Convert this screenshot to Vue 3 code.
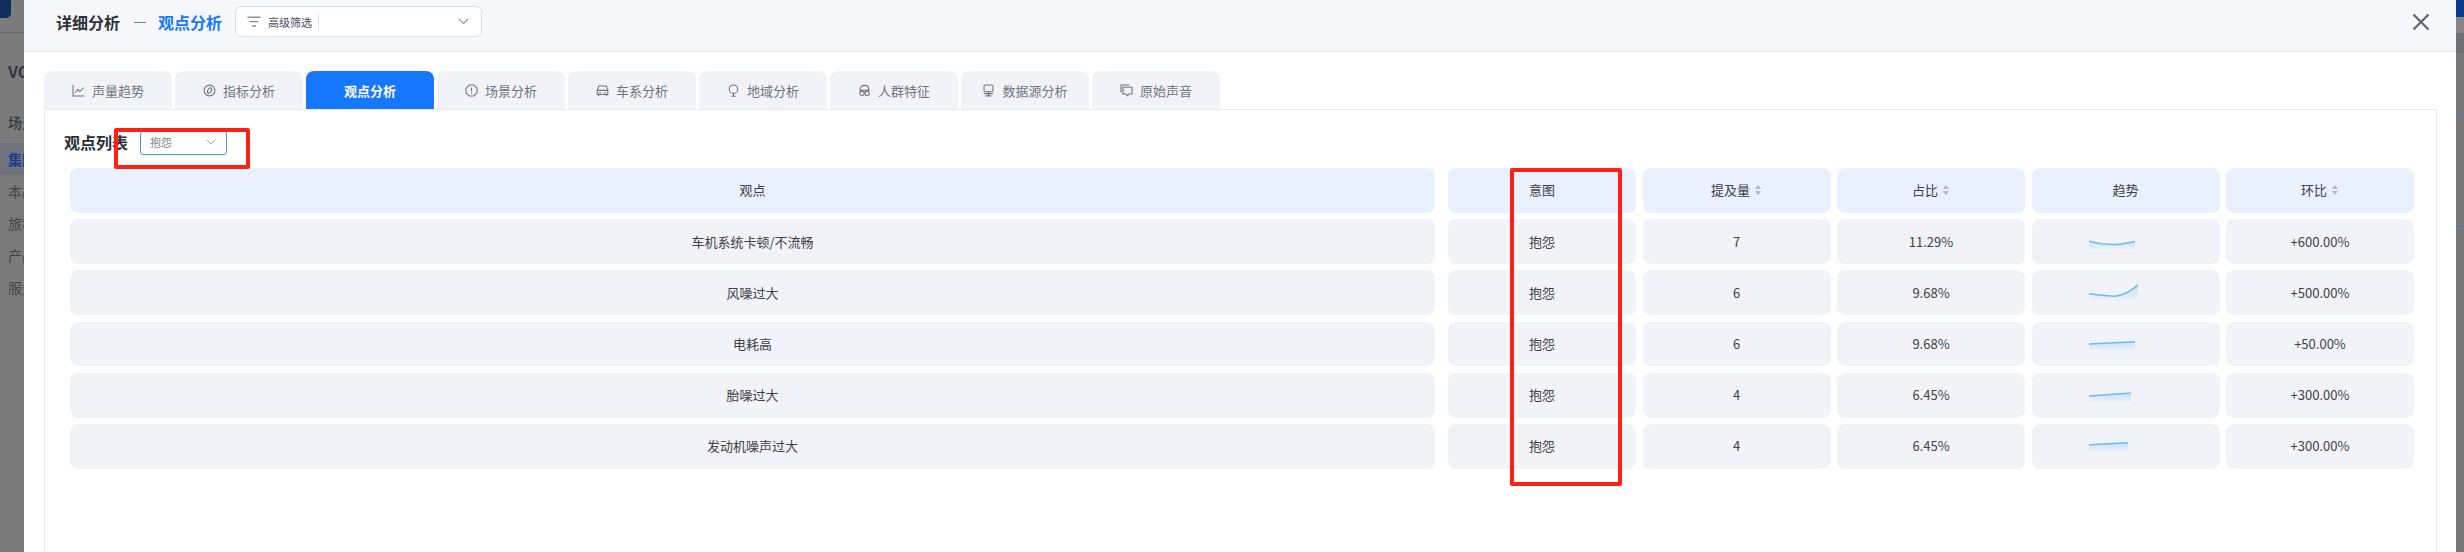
<script setup>
const sideItems = ['本品分析', '旅程分析', '产品分析', '服务分析']
const tabs = [
  { label: '声量趋势', icon: 'chart' },
  { label: '指标分析', icon: 'target' },
  { label: '观点分析', active: true },
  { label: '场景分析', icon: 'alert' },
  { label: '车系分析', icon: 'car' },
  { label: '地域分析', icon: 'pin' },
  { label: '人群特征', icon: 'people' },
  { label: '数据源分析', icon: 'screen' },
  { label: '原始声音', icon: 'comment' }
]
const rows = [
  { name: '车机系统卡顿/不流畅', count: 7, share: '11.29%', mom: '+600.00%', line: 'M13 20.2C22 22.8 30 23.5 36 23.5C44 23.5 52 22 59 20.4', area: 'L59 29L13 29Z' },
  { name: '风噪过大', count: 6, share: '9.68%', mom: '+500.00%', line: 'M13 21.8C22 23 31 24.2 39 24.2C47 23.6 55 19 62 13.2', area: 'L62 29L13 29Z' },
  { name: '电耗高', count: 6, share: '9.68%', mom: '+50.00%', line: 'M13 20L59 17.7', area: 'L59 27L13 27Z' },
  { name: '胎噪过大', count: 4, share: '6.45%', mom: '+300.00%', line: 'M13 21L55 18', area: 'L55 28L13 28Z' },
  { name: '发动机噪声过大', count: 4, share: '6.45%', mom: '+300.00%', line: 'M13 18.8L52 16.8', area: 'L52 27L13 27Z' }
]
</script>

<template>
  <div class="page">
    <aside class="side">
      <div class="side-top"><div class="logo"></div></div>
      <div class="side-brand">VOC</div>
      <div class="side-group">场景分析</div>
      <div class="side-item current">集团分析</div>
      <div v-for="item in sideItems" :key="item" class="side-item">{{ item }}</div>
    </aside>

    <main class="drawer">
      <header class="head">
        <span class="head-title">详细分析</span>
        <span class="head-dash"></span>
        <span class="head-sub">观点分析</span>
        <div class="filter">
          <svg class="filter-icon" width="14" height="12" viewBox="0 0 14 12">
            <path d="M0.5 1.2H13.5M2.8 5.6H11.2M5 10H9" stroke="#8a8d94" stroke-width="1.4" fill="none" />
          </svg>
          <span class="filter-text">高级筛选</span>
          <span class="filter-sep"></span>
          <svg class="filter-chev" width="11" height="7" viewBox="0 0 11 7">
            <path d="M1 1L5.5 5.5L10 1" stroke="#8f929a" stroke-width="1.1" fill="none" />
          </svg>
        </div>
        <svg class="close" width="18" height="18" viewBox="0 0 18 18">
          <path d="M1.5 1.5L16.5 16.5M16.5 1.5L1.5 16.5" stroke="#5f6673" stroke-width="2.3" fill="none" />
        </svg>
      </header>

      <div class="body">
        <nav class="tabs">
          <div v-for="tab in tabs" :key="tab.label" class="tab" :class="{ active: tab.active }">
            <svg v-if="tab.icon" class="tab-icon" width="13" height="13" viewBox="0 0 13 13" fill="none" stroke="#6f7580" stroke-width="1.1">
              <template v-if="tab.icon === 'chart'">
                <path d="M1 1V12H12.5" />
                <path d="M3 9L5.8 5.5L7.8 7.5L11.5 3.5" />
              </template>
              <template v-else-if="tab.icon === 'target'">
                <circle cx="6.5" cy="6.5" r="5.4" />
                <ellipse cx="6.5" cy="6.5" rx="1.7" ry="2.9" transform="rotate(30 6.5 6.5)" />
              </template>
              <template v-else-if="tab.icon === 'alert'">
                <path d="M4.2 1H8.8L12 4.2V8.8L8.8 12H4.2L1 8.8V4.2Z" />
                <path d="M6.5 3.4V7.4M6.5 8.6V9.8" />
              </template>
              <template v-else-if="tab.icon === 'car'">
                <path d="M1.2 6.4L2.6 2H10.4L11.8 6.4V10.4H1.2Z" />
                <path d="M1.2 6.4H11.8M2.6 10.4V12M10.4 10.4V12" />
                <path d="M3.4 8.4H4.6M8.4 8.4H9.6" />
              </template>
              <template v-else-if="tab.icon === 'pin'">
                <circle cx="6.5" cy="5.2" r="4.2" />
                <path d="M6.5 9.4V12M4.4 12.2H8.6" />
              </template>
              <template v-else-if="tab.icon === 'people'">
                <path d="M2.4 6V4.4C2.4 2.6 4 1.4 6.5 1.4C9 1.4 10.6 2.6 10.6 4.4V6" />
                <path d="M1.2 6.2H11.8" />
                <circle cx="4" cy="9.3" r="2.2" />
                <circle cx="9" cy="9.3" r="2.2" />
              </template>
              <template v-else-if="tab.icon === 'screen'">
                <rect x="2" y="1" width="9" height="6.8" rx="1.6" />
                <path d="M6.5 7.8V11.6M1.8 9.6H11.2M3.6 11.9H9.4" />
              </template>
              <template v-else>
                <path d="M1 8.5V1H9.5" />
                <path d="M3 3.2H12V10H8.8L7.5 11.8L6.2 10H3Z" />
              </template>
            </svg>
            <span>{{ tab.label }}</span>
          </div>
        </nav>

        <section class="panel">
          <div class="list-head">
            <h2 class="list-title">观点列表</h2>
            <div class="intent-select">
              <span>抱怨</span>
              <svg width="10" height="6" viewBox="0 0 10 6">
                <path d="M0.6 0.6L5 5L9.4 0.6" stroke="#a3a6ad" stroke-width="1" fill="none" />
              </svg>
            </div>
          </div>

          <div class="table">
            <div class="cell th first">观点</div>
            <div class="cell th">意图</div>
            <div class="cell th">提及量<i class="sort"></i></div>
            <div class="cell th">占比<i class="sort"></i></div>
            <div class="cell th">趋势</div>
            <div class="cell th">环比<i class="sort"></i></div>

            <template v-for="(row, i) in rows" :key="row.name">
              <div class="cell first">{{ row.name }}</div>
              <div class="cell">抱怨</div>
              <div class="cell">{{ row.count }}</div>
              <div class="cell">{{ row.share }}</div>
              <div class="cell">
                <svg width="100" height="40" viewBox="0 0 100 40" fill="none">
                  <defs>
                    <linearGradient :id="'fade' + i" x1="0" y1="0" x2="0" y2="1">
                      <stop offset="0" stop-color="#6cbcf0" stop-opacity="0.32" />
                      <stop offset="1" stop-color="#6cbcf0" stop-opacity="0" />
                    </linearGradient>
                  </defs>
                  <path :d="row.line + row.area" :fill="'url(#fade' + i + ')'" />
                  <path :d="row.line" stroke="#6cbcf0" stroke-width="1.5" />
                </svg>
              </div>
              <div class="cell">{{ row.mom }}</div>
            </template>
          </div>
        </section>
      </div>
    </main>

    <aside class="rail">
      <div class="rail-top"></div>
      <div class="rail-soft"></div>
      <div class="rail-dark"></div>
      <div class="rail-line first"></div>
      <div class="rail-line"></div>
    </aside>

    <div class="mark mark-select"></div>
    <div class="mark mark-column"></div>
  </div>
</template>

<style>
html, body { margin: 0; padding: 0; background: #777; }
</style>

<style scoped>
.page {
  position: relative;
  display: flex;
  width: 2464px;
  height: 552px;
  overflow: hidden;
  font-family: "Noto Sans CJK SC", "Noto Sans", sans-serif;
  font-size: 13px;
  color: #3d4048;
}
.side {
  width: 24px;
  flex: none;
  overflow: hidden;
  background: #7b7b7b;
  white-space: nowrap;
  color: #383a3f;
  font-size: 14px;
}
.side-top {
  height: 33px;
  box-sizing: border-box;
  border-bottom: 1px solid #696969;
}
.logo {
  width: 11px;
  height: 18px;
  background: #0e2d5c;
  border-radius: 0 0 5px 0;
}
.side-brand {
  margin: 26px 0 0 8px;
  height: 24px;
  line-height: 24px;
  font-size: 16px;
  font-weight: 700;
  color: #33353b;
}
.side-group {
  margin: 25px 0 7px 8px;
  height: 28px;
  line-height: 28px;
  font-weight: 500;
}
.side-item {
  height: 32px;
  line-height: 32px;
  padding-left: 8px;
  color: #444;
}
.side-item.current {
  background: #6f7380;
  color: #153b86;
  font-weight: 700;
}
.drawer {
  width: 2432px;
  flex: none;
  background: #fff;
  display: flex;
  flex-direction: column;
}
.head {
  height: 52px;
  box-sizing: border-box;
  padding: 0 26px 8px 32px;
  display: flex;
  align-items: center;
  background: #f5f7fb;
  border-bottom: 1px solid #e2e4ea;
}
.head-title, .head-sub {
  font-size: 16px;
  font-weight: 700;
  color: #2e3139;
}
.head-sub { color: #1677ff; }
.head-dash {
  width: 12px;
  height: 1px;
  margin: 1px 12px 0 14px;
  background: #7a7f8a;
}
.filter {
  width: 247px;
  height: 31px;
  box-sizing: border-box;
  margin-left: 13px;
  padding: 0 12px 0 11px;
  display: flex;
  align-items: center;
  background: #fff;
  border: 1px solid #dcdee4;
  border-radius: 6px;
}
.filter-text {
  margin-left: 7px;
  font-size: 11px;
  color: #4a4d55;
}
.filter-sep {
  width: 1px;
  height: 18px;
  margin-left: 6px;
  background: #e4e5ea;
}
.filter-chev { margin-left: auto; }
.close { margin-left: auto; }
.body {
  flex: 1;
  min-height: 0;
  padding: 19px 19px 0 20px;
  display: flex;
  flex-direction: column;
}
.tabs {
  display: flex;
  gap: 3px;
  height: 38px;
}
.tab {
  width: 128px;
  display: flex;
  align-items: center;
  justify-content: center;
  gap: 7px;
  background: #f2f3f8;
  border-radius: 8px 8px 0 0;
  color: #6f7580;
}
.tab.active {
  background: #1677ff;
  color: #fff;
  font-weight: 700;
}
.panel {
  flex: 1;
  min-height: 0;
  box-sizing: border-box;
  padding: 20px 22px 0 19px;
  border: 1px solid #e9ebf0;
  border-bottom: none;
}
.list-head {
  display: flex;
  align-items: center;
  gap: 12px;
  height: 24px;
}
.list-title {
  margin: 0;
  font-size: 16px;
  font-weight: 700;
  color: #2a2d35;
}
.intent-select {
  width: 87px;
  height: 24px;
  box-sizing: border-box;
  margin-top: 1px;
  padding: 0 10px 2px 9px;
  display: flex;
  align-items: center;
  justify-content: space-between;
  border: 1px solid #4a94ff;
  border-radius: 3px;
  font-size: 11px;
  color: #85878d;
}
.table {
  display: grid;
  grid-template-columns: 1371.5px repeat(5, 188px);
  grid-auto-rows: 44.6px;
  column-gap: 6.5px;
  row-gap: 6.65px;
  margin: 14px 0 0 6px;
}
.cell {
  display: flex;
  align-items: center;
  justify-content: center;
  padding-bottom: 1px;
  background: #f2f3f8;
  border-radius: 8px;
}
.cell.first { margin-right: 6.5px; }
.th { background: #e9f1fe; }
.sort {
  position: relative;
  width: 7px;
  height: 10px;
  margin-left: 5px;
}
.sort::before, .sort::after {
  content: "";
  position: absolute;
  left: 0;
  border-left: 3.5px solid transparent;
  border-right: 3.5px solid transparent;
}
.sort::before { top: 0; border-bottom: 4px solid #b6b9c1; }
.sort::after { bottom: 0; border-top: 4px solid #b6b9c1; }
.rail {
  position: relative;
  flex: 1;
  background: #777;
}
.rail-top { height: 17px; background: #0b3a8a; }
.rail-soft { height: 16px; background: #868686; }
.rail-dark { height: 20px; background: #6f7073; }
.rail-line {
  height: 1px;
  margin-top: 107px;
  background: #4d86c6;
}
.rail-line.first { margin-top: 63px; }
.mark {
  position: absolute;
  box-sizing: border-box;
  border: 4px solid #ff2016;
  border-radius: 2px;
}
.mark-select { left: 114px; top: 128px; width: 136px; height: 41px; }
.mark-column { left: 1510px; top: 168px; width: 112px; height: 318px; }
</style>
